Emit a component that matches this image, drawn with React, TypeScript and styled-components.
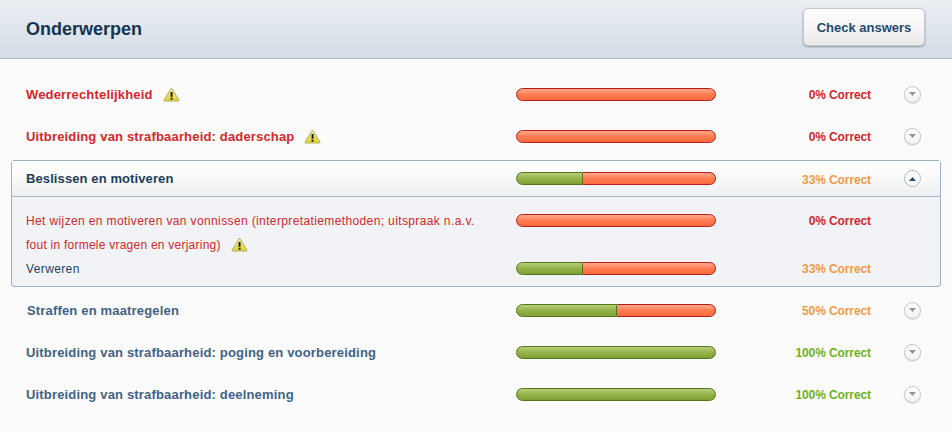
import React from 'react';
import styled, { createGlobalStyle } from 'styled-components';

type Tone = 'bad' | 'mid' | 'good';

const toneColor: Record<Tone, string> = {
  bad: '#d4272c',
  mid: '#f39a45',
  good: '#6fb21c',
};

const GlobalStyle = createGlobalStyle`
  html, body {
    margin: 0;
    padding: 0;
    background: #fbfbfb;
  }
  body {
    font-family: "Liberation Sans", Arial, sans-serif;
    font-size: 13px;
  }
`;

const Page = styled.div`
  width: 952px;
  height: 432px;
  overflow: hidden;
  background: #fbfbfb;
`;

const Header = styled.header`
  box-sizing: border-box;
  height: 59px;
  display: flex;
  align-items: center;
  justify-content: space-between;
  padding: 0 27px 1px 26px;
  background: linear-gradient(#eaeef3, #e4e9ef 30%, #d3dde6);
  border-bottom: 1px solid #aab6cc;
`;

const Title = styled.h1`
  margin: 2px 0 0;
  font-size: 18px;
  font-weight: bold;
  color: #153552;
`;

const CheckButton = styled.button`
  box-sizing: border-box;
  width: 122px;
  height: 38px;
  margin-bottom: 3px;
  border: 1px solid #c3c7cc;
  border-radius: 5px;
  background: linear-gradient(#fdfdfd, #f6f6f6 50%, #e8e8e8);
  box-shadow: 0 1px 2px rgba(70, 80, 95, 0.55);
  font-family: inherit;
  font-size: 13px;
  font-weight: bold;
  color: #234a6e;
`;

const List = styled.div`
  padding-top: 14px;
`;

const Row = styled.div`
  display: flex;
  align-items: center;
  height: 42px;
  padding-left: 26px;
`;

const Panel = styled.section`
  box-sizing: border-box;
  width: 930px;
  height: 127px;
  margin: 3px 0 2px 11px;
  border: 1px solid #9db0c4;
  border-radius: 3px;
  background: #f1f3f6;
`;

const PanelHead = styled(Row)`
  height: 35px;
  padding-left: 14px;
  border-bottom: 1px solid #a9b8c8;
  background: linear-gradient(#ffffff, #fbfbfb 40%, #eeeff1);
`;

const PanelBody = styled.div`
  padding-top: 12px;
`;

const SubRow = styled.div`
  display: flex;
  align-items: flex-start;
  padding-left: 14px;
`;

const SubMeta = styled.div`
  display: flex;
  align-items: center;
  height: 22px;
`;

const Name = styled.div<{ $tone?: Tone; $indent?: number }>`
  box-sizing: border-box;
  width: 490px;
  flex: none;
  padding-left: ${(p) => p.$indent ?? 0}px;
  font-weight: bold;
  font-size: 13px;
  letter-spacing: 0.17px;
  color: ${(p) => (p.$tone ? toneColor[p.$tone] : '#3f6289')};
`;

const DarkName = styled(Name)`
  letter-spacing: 0.1px;
  color: #1d3f5c;
`;

const SubName = styled.div<{ $tone?: Tone }>`
  box-sizing: border-box;
  width: 490px;
  flex: none;
  padding-right: 30px;
  font-size: 12px;
  line-height: 24px;
  letter-spacing: 0.375px;
  color: ${(p) => (p.$tone ? toneColor[p.$tone] : '#1d3f5c')};
`;

const TightText = styled.span`
  letter-spacing: 0.24px;
`;

const Bar = styled.div`
  width: 200px;
  height: 13px;
  flex: none;
  display: flex;
`;

const BarGood = styled.div<{ $full: boolean }>`
  box-sizing: border-box;
  flex: none;
  height: 100%;
  border: 1px solid #56751c;
  border-radius: ${(p) => (p.$full ? '7px' : '7px 0 0 7px')};
  background: linear-gradient(#b8cf7a, #94b24a 50%, #7f9f33);
`;

const BarBad = styled.div<{ $solo: boolean }>`
  box-sizing: border-box;
  flex: 1;
  height: 100%;
  border: 1px solid #b81e1e;
  border-left-width: ${(p) => (p.$solo ? '1px' : '0')};
  border-radius: ${(p) => (p.$solo ? '7px' : '0 7px 7px 0')};
  background: linear-gradient(#ffa98c, #ff7c50 50%, #fc6a3d);
`;

const Score = styled.div<{ $tone: Tone }>`
  box-sizing: border-box;
  width: 155px;
  flex: none;
  padding-top: 2px;
  text-align: right;
  font-size: 12px;
  font-weight: bold;
  letter-spacing: -0.1px;
  color: ${(p) => toneColor[p.$tone]};
`;

const Toggle = styled.button<{ $open?: boolean }>`
  box-sizing: border-box;
  width: 17px;
  height: 17px;
  flex: none;
  margin-left: 33px;
  padding: 0;
  display: flex;
  align-items: center;
  justify-content: center;
  border: 1px solid ${(p) => (p.$open ? '#b4bcc4' : '#c6c6c6')};
  border-radius: 50%;
  background: ${(p) => (p.$open ? '#fbfbfb' : 'linear-gradient(#fefefe, #f3f3f3)')};
  box-shadow: ${(p) => (p.$open ? 'none' : '0 1px 1px rgba(0, 0, 0, 0.12)')};
`;

const WarnWrap = styled.span`
  display: inline-block;
  margin-left: 10px;
  vertical-align: -3px;
  line-height: 0;
`;

const Warning = () => (
  <WarnWrap>
    <svg width="17" height="15" viewBox="0 0 17 15">
      <defs>
        <linearGradient id="warn" x1="0" y1="0" x2="0" y2="1">
          <stop offset="0" stopColor="#f7f09c" />
          <stop offset="1" stopColor="#dcd02e" />
        </linearGradient>
      </defs>
      <path
        d="M8.5 1 L16 13 Q16.4 14 15.2 14 L1.8 14 Q0.6 14 1 13 Z"
        fill="url(#warn)"
        stroke="#b5b26a"
        strokeWidth="1"
        strokeLinejoin="round"
      />
      <rect x="7.6" y="5" width="1.9" height="4.8" fill="#15150a" />
      <rect x="7.6" y="10.8" width="1.9" height="1.9" fill="#15150a" />
    </svg>
  </WarnWrap>
);

const Arrow = ({ up, color }: { up?: boolean; color: string }) => (
  <svg width="7" height="4" viewBox="0 0 7 4">
    <path d={up ? 'M3.5 0 L7 4 L0 4 Z' : 'M0 0 L7 0 L3.5 4 Z'} fill={color} />
  </svg>
);

const Progress = ({ value }: { value: number }) => (
  <Bar>
    {value > 0 && (
      <BarGood $full={value === 100} style={{ width: value === 100 ? '100%' : value * 2 + 1 }} />
    )}
    {value < 100 && <BarBad $solo={value === 0} />}
  </Bar>
);

const topics: { name: string; value: number; score: Tone; indent?: number }[] = [
  { name: 'Straffen en maatregelen', value: 50, score: 'mid', indent: 1 },
  { name: 'Uitbreiding van strafbaarheid: poging en voorbereiding', value: 100, score: 'good' },
  { name: 'Uitbreiding van strafbaarheid: deelneming', value: 100, score: 'good' },
];

const failing = ['Wederrechtelijkheid', 'Uitbreiding van strafbaarheid: daderschap'];

export default function App() {
  return (
    <Page>
      <GlobalStyle />
      <Header>
        <Title>Onderwerpen</Title>
        <CheckButton type="button">Check answers</CheckButton>
      </Header>
      <List>
        {failing.map((name) => (
          <Row key={name}>
            <Name $tone="bad">
              {name}
              <Warning />
            </Name>
            <Progress value={0} />
            <Score $tone="bad">0% Correct</Score>
            <Toggle type="button">
              <Arrow color="#8d949c" />
            </Toggle>
          </Row>
        ))}

        <Panel>
          <PanelHead>
            <DarkName>Beslissen en motiveren</DarkName>
            <Progress value={33} />
            <Score $tone="mid">33% Correct</Score>
            <Toggle type="button" $open>
              <Arrow up color="#2f4a63" />
            </Toggle>
          </PanelHead>
          <PanelBody>
            <SubRow>
              <SubName $tone="bad">
                Het wijzen en motiveren van vonnissen (interpretatiemethoden; uitspraak n.a.v.{' '}
                <TightText>fout in formele vragen en verjaring)</TightText>
                <Warning />
              </SubName>
              <SubMeta>
                <Progress value={0} />
                <Score $tone="bad">0% Correct</Score>
              </SubMeta>
            </SubRow>
            <SubRow>
              <SubName>Verweren</SubName>
              <SubMeta>
                <Progress value={33} />
                <Score $tone="mid">33% Correct</Score>
              </SubMeta>
            </SubRow>
          </PanelBody>
        </Panel>

        {topics.map((t) => (
          <Row key={t.name}>
            <Name $indent={t.indent}>{t.name}</Name>
            <Progress value={t.value} />
            <Score $tone={t.score}>{t.value}% Correct</Score>
            <Toggle type="button">
              <Arrow color="#8d949c" />
            </Toggle>
          </Row>
        ))}
      </List>
    </Page>
  );
}
